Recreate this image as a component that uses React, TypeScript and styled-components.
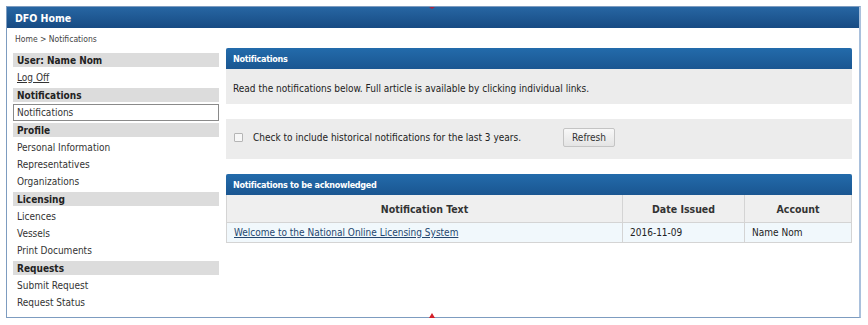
import React from "react"
import styled, { createGlobalStyle } from "styled-components"

const GlobalStyle = createGlobalStyle`
  html, body {
    margin: 0;
    padding: 0;
    background: #ffffff;
  }
  body {
    font-family: "DejaVu Sans", Verdana, sans-serif;
    font-stretch: condensed;
    color: #333;
  }
`

const Frame = styled.div`
  position: relative;
  margin: 6px 0 0 6px;
  width: 852px;
  height: 310px;
  border: 1px solid #7d9cc0;
  border-right: 2px solid #a9c0dc;
  display: flex;
  flex-direction: column;
`

const TopBar = styled.div`
  height: 21px;
  display: flex;
  align-items: center;
  padding-left: 8px;
  background: linear-gradient(#2766a3, #174b83);
  color: #fff;
  font-weight: bold;
  font-size: 10.5px;
`

const Crumbs = styled.div`
  height: 20px;
  display: flex;
  align-items: center;
  padding: 2px 0 0 8px;
  box-sizing: border-box;
  font-size: 8.5px;
  color: #444;
`

const Body = styled.div`
  display: grid;
  grid-template-columns: 206px 626px;
  gap: 7px;
  padding-left: 6px;
`

const Sidebar = styled.nav`
  padding-top: 5px;
  display: flex;
  flex-direction: column;
`

const SideHeader = styled.div`
  height: 14px;
  margin: 2px 0;
  display: flex;
  align-items: center;
  padding-left: 4px;
  background: #dcdcdc;
  color: #222;
  font-weight: bold;
  font-size: 10px;
  &:first-child {
    margin-top: 0;
  }
`

const SideItem = styled.div<{ active?: boolean; link?: boolean }>`
  height: ${({ active }) => (active ? "15px" : "17px")};
  display: flex;
  align-items: center;
  padding-left: ${({ active }) => (active ? "3px" : "4px")};
  font-size: 10px;
  color: #333;
  text-decoration: ${({ link }) => (link ? "underline" : "none")};
  background: #fff;
  border: ${({ active }) => (active ? "1px solid #8a8a8a" : "none")};
`

const Main = styled.main`
  display: flex;
  flex-direction: column;
`

const Panel = styled.section<{ gap?: number }>`
  margin-top: ${({ gap }) => gap ?? 0}px;
  background: #ececec;
`

const PanelHeader = styled.div`
  height: 21px;
  display: flex;
  align-items: center;
  padding-left: 7px;
  background: linear-gradient(#236bab, #1a5691);
  border-radius: 2px 2px 0 0;
  color: #fff;
  font-weight: bold;
  font-size: 9px;
  letter-spacing: -0.3px;
`

const PanelText = styled.div`
  height: 35px;
  display: flex;
  align-items: center;
  padding: 3px 0 0 7px;
  box-sizing: border-box;
  font-size: 10px;
  color: #222;
`

const FilterRow = styled.div`
  height: 40px;
  display: flex;
  align-items: center;
  padding: 0 0 4px 8px;
  box-sizing: border-box;
  font-size: 10px;
  color: #222;
`

const Check = styled.span`
  width: 7px;
  height: 7px;
  border: 1px solid #b5b5b5;
  border-radius: 1px;
  background: #f7f7f7;
  margin-right: 10px;
`

const RefreshButton = styled.button`
  margin-left: 42px;
  height: 19px;
  padding: 0 8px;
  border: 1px solid #c4c4c4;
  border-radius: 2px;
  background: linear-gradient(#f8f8f8, #e4e4e4);
  font-family: inherit;
  font-stretch: condensed;
  font-size: 10px;
  color: #333;
`

const Table = styled.table`
  width: 100%;
  border-collapse: collapse;
  background: #fff;
  font-size: 10px;
`

const Th = styled.th<{ width?: number }>`
  width: ${({ width }) => (width ? `${width}px` : "auto")};
  height: 27px;
  background: #efefef;
  border: 1px solid #d4d4d4;
  border-top: none;
  font-size: 10.5px;
  color: #333;
  padding: 0;
`

const Td = styled.td`
  height: 19px;
  background: #f1f8fc;
  border: 1px solid #d4d4d4;
  padding: 0 7px;
  color: #222;
`

const NoticeLink = styled.a`
  color: #24466f;
  text-decoration: underline;
`

const Marker = styled.span<{ bottom?: boolean }>`
  position: absolute;
  left: 422px;
  ${({ bottom }) => (bottom ? "bottom: -1px;" : "top: 0;")}
  width: 0;
  height: 0;
  border-left: 3px solid transparent;
  border-right: 3px solid transparent;
  ${({ bottom }) =>
    bottom ? "border-bottom: 5px solid #d4202a;" : "border-top: 2px solid #b0203a;"}
`

const sections: { title: string; items: { label: string; active?: boolean; link?: boolean }[] }[] = [
  { title: "User: Name Nom", items: [{ label: "Log Off", link: true }] },
  { title: "Notifications", items: [{ label: "Notifications", active: true }] },
  {
    title: "Profile",
    items: [{ label: "Personal Information" }, { label: "Representatives" }, { label: "Organizations" }],
  },
  {
    title: "Licensing",
    items: [{ label: "Licences" }, { label: "Vessels" }, { label: "Print Documents" }],
  },
  { title: "Requests", items: [{ label: "Submit Request" }, { label: "Request Status" }] },
]

export default function App() {
  return (
    <>
      <GlobalStyle />
      <Frame>
        <TopBar>DFO Home</TopBar>
        <Crumbs>Home &gt; Notifications</Crumbs>
        <Body>
          <Sidebar>
            {sections.map((s) => (
              <React.Fragment key={s.title}>
                <SideHeader>{s.title}</SideHeader>
                {s.items.map((i) => (
                  <SideItem key={i.label} active={i.active} link={i.link}>
                    {i.label}
                  </SideItem>
                ))}
              </React.Fragment>
            ))}
          </Sidebar>
          <Main>
            <Panel>
              <PanelHeader>Notifications</PanelHeader>
              <PanelText>
                Read the notifications below. Full article is available by clicking individual links.
              </PanelText>
            </Panel>
            <Panel gap={15}>
              <FilterRow>
                <Check />
                Check to include historical notifications for the last 3 years.
                <RefreshButton>Refresh</RefreshButton>
              </FilterRow>
            </Panel>
            <Panel gap={15}>
              <PanelHeader>Notifications to be acknowledged</PanelHeader>
              <Table>
                <thead>
                  <tr>
                    <Th width={395}>Notification Text</Th>
                    <Th width={121}>Date Issued</Th>
                    <Th>Account</Th>
                  </tr>
                </thead>
                <tbody>
                  <tr>
                    <Td>
                      <NoticeLink href="#">Welcome to the National Online Licensing System</NoticeLink>
                    </Td>
                    <Td>2016-11-09</Td>
                    <Td>Name Nom</Td>
                  </tr>
                </tbody>
              </Table>
            </Panel>
          </Main>
        </Body>
        <Marker />
        <Marker bottom />
      </Frame>
    </>
  )
}
